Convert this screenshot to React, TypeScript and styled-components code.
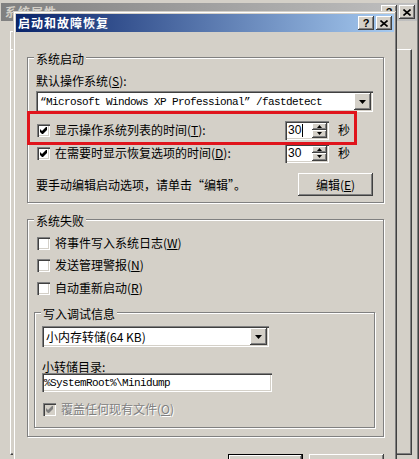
import React from "react";
import styled, { createGlobalStyle } from "styled-components";

const FACE = "#d4d0c8";
const SHADOW = "#808080";
const DARK = "#404040";

const GlobalStyle = createGlobalStyle`
  html, body {
    margin: 0;
    padding: 0;
  }
  body {
    background: ${FACE};
    font-family: "Noto Sans CJK SC", "Liberation Sans", sans-serif;
    font-size: 12px;
    color: #000;
    overflow: hidden;
  }
`;

const raised = `
  box-shadow: inset -1px -1px 0 ${DARK}, inset 1px 1px 0 #fff,
    inset -2px -2px 0 ${SHADOW}, inset 2px 2px 0 ${FACE};
`;

const sunken = `
  box-shadow: inset 1px 1px 0 ${SHADOW}, inset 2px 2px 0 ${DARK},
    inset -1px -1px 0 #fff, inset -2px -2px 0 ${FACE};
`;

const Desktop = styled.div`
  position: relative;
  width: 419px;
  height: 459px;
  overflow: hidden;
  background: ${FACE};
`;

/* the "系统属性" window lying behind the dialog */
const BackWindow = styled.div`
  position: absolute;
  left: -2px;
  top: 0;
  width: 421px;
  height: 480px;
  box-sizing: border-box;
  padding: 3px 2px 0 3px;
  background: ${FACE};
  box-shadow: inset -1px 0 0 ${DARK}, inset -2px 0 0 ${SHADOW};
  display: flex;
  flex-direction: column;
`;

const BackBody = styled.div`
  padding: 10px 0 0 9px;
  display: flex;
  flex-direction: column;
`;

const BackTab = styled.div`
  width: 60px;
  height: 17px;
  border-left: 1px solid #fff;
  border-top: 1px solid #fff;
`;

const BackPanel = styled.div`
  box-sizing: border-box;
  width: 402px;
  height: 406px;
  border: 1px solid;
  border-color: #fff ${DARK} ${DARK} #fff;
  box-shadow: inset -1px -1px 0 ${SHADOW};
`;

const Dialog = styled.div`
  position: absolute;
  left: 13px;
  top: 11px;
  width: 384px;
  height: 470px;
  box-sizing: border-box;
  padding: 3px;
  background: ${FACE};
  box-shadow: inset -1px -1px 0 ${DARK}, inset 1px 1px 0 ${FACE},
    inset -2px -2px 0 ${SHADOW}, inset 2px 2px 0 #fff;
  display: flex;
  flex-direction: column;
`;

const TitleBar = styled.div<{ $active?: boolean }>`
  flex: none;
  height: 18px;
  display: flex;
  align-items: center;
  padding: 0 2px 0 ${(p) => (p.$active ? 2 : 4)}px;
  background: linear-gradient(
    to right,
    ${(p) => (p.$active ? "#0a246a, #a6caf0" : "#808080, #c0c0c0")}
  );
  color: ${(p) => (p.$active ? "#fff" : FACE)};
`;

const TitleText = styled.span`
  flex: 1;
  font-weight: bold;
  letter-spacing: 1px;
  line-height: 18px;
  white-space: nowrap;
  overflow: hidden;
`;

const CaptionButton = styled.span`
  box-sizing: border-box;
  width: 16px;
  height: 14px;
  background: ${FACE};
  ${raised}
  display: flex;
  align-items: center;
  justify-content: center;
  color: #000;
  font-family: "Liberation Sans", sans-serif;
  font-weight: bold;
  font-size: 11px;
  line-height: 14px;
  & + & {
    margin-left: 2px;
  }
`;

const DialogBody = styled.div`
  display: flex;
  flex-direction: column;
  padding: 25px 0 0 11px;
`;

const Group = styled.div<{
  $w: number;
  $h: number;
  $pt: number;
  $pl: number;
  $mt?: number;
  $ml?: number;
}>`
  position: relative;
  box-sizing: border-box;
  flex: none;
  width: ${(p) => p.$w}px;
  height: ${(p) => p.$h}px;
  margin-top: ${(p) => p.$mt ?? 0}px;
  margin-left: ${(p) => p.$ml ?? 0}px;
  padding: ${(p) => p.$pt}px 0 0 ${(p) => p.$pl}px;
  border: 1px solid ${SHADOW};
  box-shadow: inset 1px 1px 0 #fff, 1px 1px 0 #fff;
  display: flex;
  flex-direction: column;
`;

const GroupTitle = styled.span`
  position: absolute;
  top: -6px;
  left: 6px;
  padding: 0 2px;
  background: ${FACE};
  line-height: 14px;
  white-space: nowrap;
`;

const Label = styled.div<{ $mt?: number; $lh?: number }>`
  margin-top: ${(p) => p.$mt ?? 0}px;
  line-height: ${(p) => p.$lh ?? 16}px;
  white-space: nowrap;
`;

const Combo = styled.div<{ $w: number; $mt?: number }>`
  box-sizing: border-box;
  flex: none;
  width: ${(p) => p.$w}px;
  height: 21px;
  margin-top: ${(p) => p.$mt ?? 0}px;
  padding: 2px;
  background: #fff;
  ${sunken}
  display: flex;
`;

const FieldText = styled.span<{ $mono?: boolean }>`
  flex: 1;
  display: flex;
  align-items: center;
  padding-left: 2px;
  white-space: nowrap;
  overflow: hidden;
  ${(p) =>
    p.$mono &&
    `
    font-family: "Liberation Mono", "Noto Sans CJK SC", monospace;
    font-size: 11px;
    letter-spacing: -0.6px;
  `}
`;

const DropButton = styled.span`
  width: 17px;
  background: ${FACE};
  ${raised}
  display: flex;
  align-items: center;
  justify-content: center;
`;

const TextField = styled.div<{ $w: number }>`
  box-sizing: border-box;
  flex: none;
  width: ${(p) => p.$w}px;
  height: 19px;
  padding: 2px 2px 2px 0;
  background: #fff;
  ${sunken}
  display: flex;
`;

const CheckRow = styled.div<{ $mt?: number }>`
  display: flex;
  align-items: center;
  height: 20px;
  margin-top: ${(p) => p.$mt ?? 0}px;
  padding-left: 1px;
`;

const CheckBox = styled.span<{ $disabled?: boolean }>`
  flex: none;
  width: 13px;
  height: 13px;
  background: ${(p) => (p.$disabled ? FACE : "#fff")};
  ${sunken}
  display: flex;
`;

const CheckLabel = styled.span<{ $disabled?: boolean }>`
  flex: 1;
  margin-left: 5px;
  line-height: 16px;
  white-space: nowrap;
  color: ${(p) => (p.$disabled ? SHADOW : "#000")};
  text-shadow: ${(p) => (p.$disabled ? "1px 1px 0 #fff" : "none")};
`;

const SpinBox = styled.div`
  box-sizing: border-box;
  flex: none;
  width: 44px;
  height: 19px;
  padding: 2px;
  background: #fff;
  ${sunken}
  display: flex;
`;

const SpinValue = styled.span`
  flex: 1;
  display: flex;
  align-items: center;
  padding-left: 1px;
  font-family: "Liberation Sans", sans-serif;
  font-size: 12px;
`;

const Caret = styled.span`
  display: inline-block;
  width: 1px;
  height: 13px;
  margin-left: 1px;
  background: #000;
`;

const SpinButtons = styled.span`
  width: 15px;
  display: flex;
  flex-direction: column;
`;

const SpinArrow = styled.span`
  flex: 1;
  background: ${FACE};
  ${raised}
  display: flex;
  align-items: center;
  justify-content: center;
`;

const Seconds = styled.span`
  margin: 0 33px 0 9px;
  line-height: 16px;
`;

const EditRow = styled.div`
  display: flex;
  align-items: center;
  justify-content: space-between;
  height: 23px;
  margin: 10px 10px 0 0;
`;

const PushButton = styled.button<{ $default?: boolean }>`
  box-sizing: border-box;
  width: 75px;
  height: 23px;
  padding: 0;
  border: ${(p) => (p.$default ? "1px solid #000" : "none")};
  background: ${FACE};
  ${raised}
  font: inherit;
  color: #000;
  line-height: 16px;
`;

const ButtonRow = styled.div`
  display: flex;
  justify-content: flex-end;
  gap: 6px;
  margin-top: 17px;
  padding-right: 10px;
`;

const Highlight = styled.div`
  position: absolute;
  left: 27px;
  top: 111px;
  width: 330px;
  height: 34px;
  box-sizing: border-box;
  border: 3px solid #e0141c;
  pointer-events: none;
`;

function Check({ disabled }: { disabled?: boolean }) {
  return (
    <CheckBox $disabled={disabled}>
      <svg width="13" height="13" viewBox="0 0 13 13">
        <polygon
          points="3,5 5,7 9,3 10,3 10,6 6,10 5,10 3,8"
          fill={disabled ? SHADOW : "#000"}
        />
      </svg>
    </CheckBox>
  );
}

function EmptyCheck() {
  return <CheckBox />;
}

function DownArrow() {
  return (
    <svg width="7" height="4" viewBox="0 0 7 4">
      <polygon points="0,0 7,0 3.5,4" fill="#000" />
    </svg>
  );
}

function Spin({ value, caret }: { value: string; caret?: boolean }) {
  return (
    <SpinBox>
      <SpinValue>
        {value}
        {caret && <Caret />}
      </SpinValue>
      <SpinButtons>
        <SpinArrow>
          <svg width="5" height="3" viewBox="0 0 5 3">
            <polygon points="2.5,0 5,3 0,3" fill="#000" />
          </svg>
        </SpinArrow>
        <SpinArrow>
          <svg width="5" height="3" viewBox="0 0 5 3">
            <polygon points="0,0 5,0 2.5,3" fill="#000" />
          </svg>
        </SpinArrow>
      </SpinButtons>
    </SpinBox>
  );
}

function CloseGlyph() {
  return (
    <svg width="8" height="7" viewBox="0 0 8 7">
      <path d="M0.5 0.5L7.5 6.5M7.5 0.5L0.5 6.5" stroke="#000" strokeWidth="1.6" />
    </svg>
  );
}

export default function App() {
  return (
    <Desktop lang="zh-CN">
      <GlobalStyle />

      <BackWindow>
        <TitleBar>
          <TitleText>系统属性</TitleText>
          <CaptionButton>?</CaptionButton>
          <CaptionButton>
            <CloseGlyph />
          </CaptionButton>
        </TitleBar>
        <BackBody>
          <BackTab />
          <BackPanel />
        </BackBody>
      </BackWindow>

      <Dialog>
        <TitleBar $active>
          <TitleText>启动和故障恢复</TitleText>
          <CaptionButton>?</CaptionButton>
          <CaptionButton>
            <CloseGlyph />
          </CaptionButton>
        </TitleBar>

        <DialogBody>
          <Group $w={357} $h={146} $pt={15} $pl={8}>
            <GroupTitle>系统启动</GroupTitle>
            <Label>
              默认操作系统(<u>S</u>):
            </Label>
            <Combo $w={337} $mt={2}>
              <FieldText $mono>“Microsoft Windows XP Professional” /fastdetect</FieldText>
              <DropButton>
                <DownArrow />
              </DropButton>
            </Combo>
            <CheckRow $mt={8}>
              <Check />
              <CheckLabel>
                显示操作系统列表的时间(<u>T</u>):
              </CheckLabel>
              <Spin value="30" caret />
              <Seconds>秒</Seconds>
            </CheckRow>
            <CheckRow $mt={3}>
              <Check />
              <CheckLabel>
                在需要时显示恢复选项的时间(<u>D</u>):
              </CheckLabel>
              <Spin value="30" />
              <Seconds>秒</Seconds>
            </CheckRow>
            <EditRow>
              <span>要手动编辑启动选项，请单击“编辑”。</span>
              <PushButton>
                编辑(<u>E</u>)
              </PushButton>
            </EditRow>
          </Group>

          <Group $w={357} $h={218} $pt={13} $pl={8} $mt={16}>
            <GroupTitle>系统失败</GroupTitle>
            <CheckRow>
              <EmptyCheck />
              <CheckLabel>
                将事件写入系统日志(<u>W</u>)
              </CheckLabel>
            </CheckRow>
            <CheckRow $mt={2}>
              <EmptyCheck />
              <CheckLabel>
                发送管理警报(<u>N</u>)
              </CheckLabel>
            </CheckRow>
            <CheckRow $mt={3}>
              <EmptyCheck />
              <CheckLabel>
                自动重新启动(<u>R</u>)
              </CheckLabel>
            </CheckRow>

            <Group $w={341} $h={116} $pt={13} $pl={7} $mt={14} $ml={-2}>
              <GroupTitle>写入调试信息</GroupTitle>
              <Combo $w={227}>
                <FieldText>小内存转储(64 KB)</FieldText>
                <DropButton>
                  <DownArrow />
                </DropButton>
              </Combo>
              <Label $mt={13} $lh={13}>
                小转储目录:
              </Label>
              <TextField $w={230}>
                <FieldText $mono>%SystemRoot%\Minidump</FieldText>
              </TextField>
              <CheckRow $mt={7}>
                <Check disabled />
                <CheckLabel $disabled>
                  覆盖任何现有文件(<u>O</u>)
                </CheckLabel>
              </CheckRow>
            </Group>
          </Group>

          <ButtonRow>
            <PushButton $default>确定</PushButton>
            <PushButton>取消</PushButton>
          </ButtonRow>
        </DialogBody>
      </Dialog>

      <Highlight />
    </Desktop>
  );
}
